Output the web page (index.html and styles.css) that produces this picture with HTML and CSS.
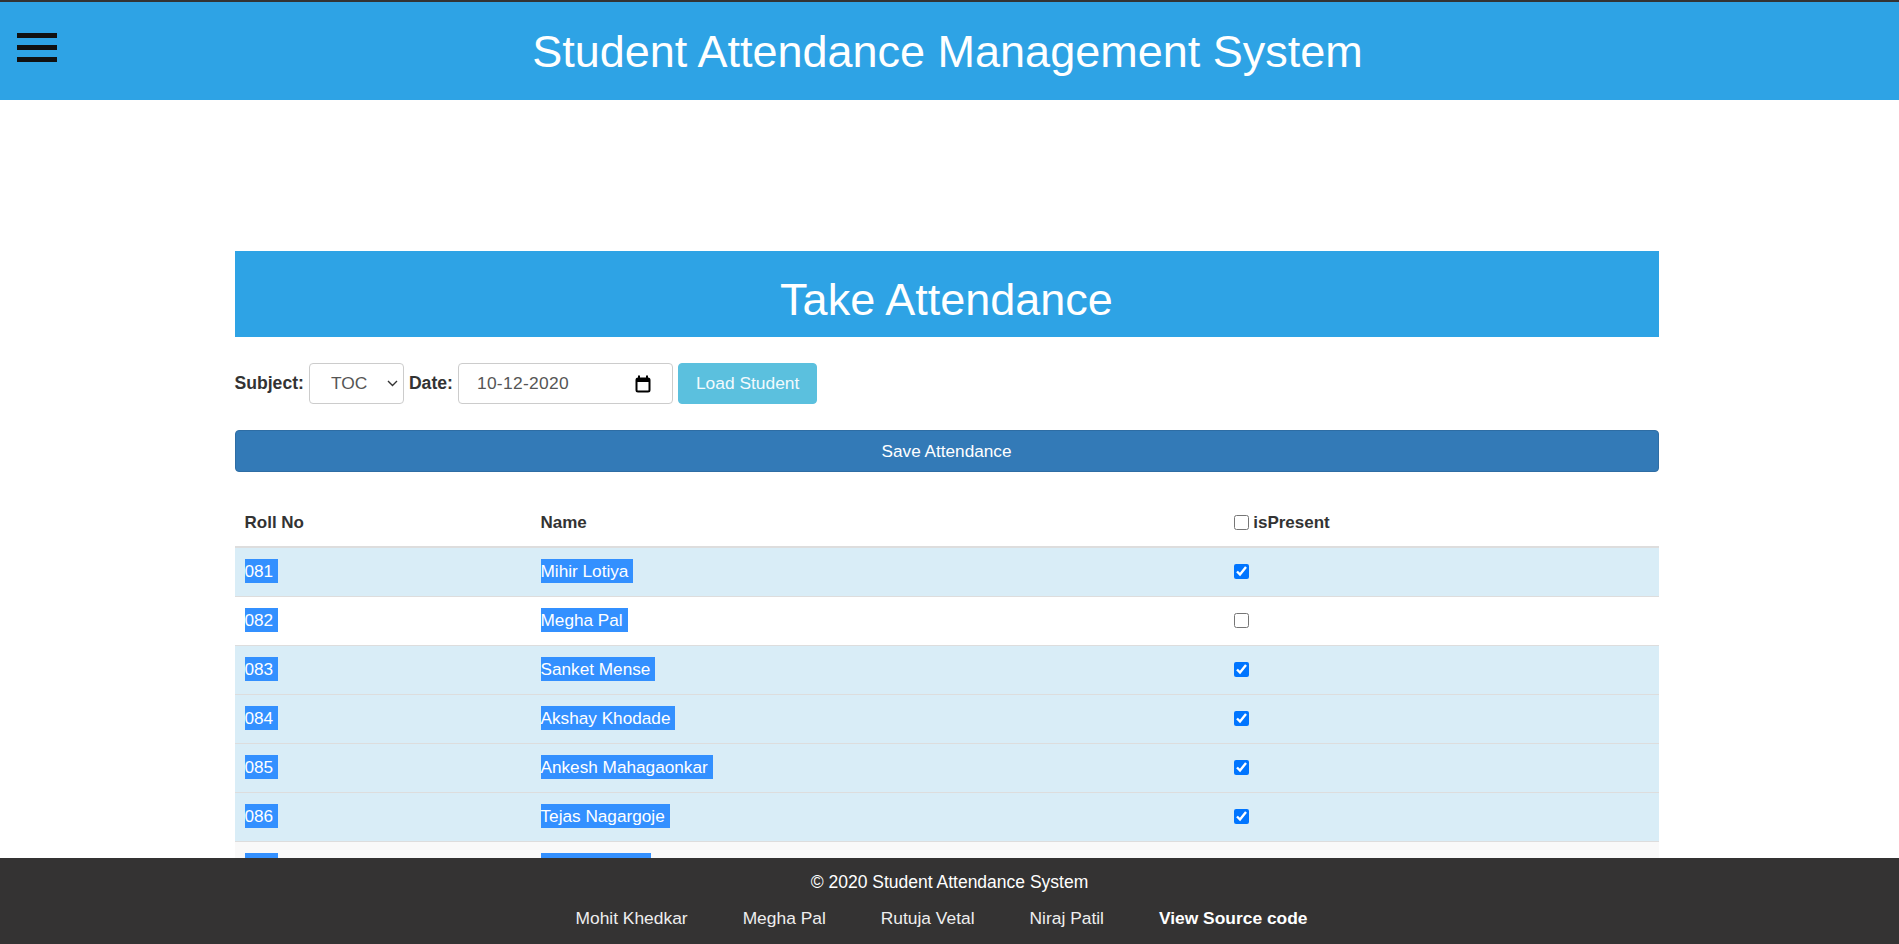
FILE: index.html
```html
<!DOCTYPE html>
<html lang="en">
<head>
<meta charset="utf-8">
<title>Student Attendance Management System</title>
<link rel="stylesheet" href="styles.css">
</head>
<body>
<header class="navbar">
  <button class="menu" aria-label="Menu"><span></span><span></span><span></span></button>
  <h1 class="site-title">Student Attendance Management System</h1>
  <div class="nav-spacer"></div>
</header>

<main class="container">
  <h2 class="band">Take Attendance</h2>

  <div class="form-row">
    <label class="lbl">Subject:</label>
    <div class="select">
      <span>TOC</span>
      <svg class="chev" width="11" height="7" viewBox="0 0 11 7"><path d="M1 1 L5.5 5.5 L10 1" fill="none" stroke="#333" stroke-width="1.4"/></svg>
    </div>
    <label class="lbl">Date:</label>
    <div class="date">
      <span>10-12-2020</span>
      <svg class="cal" width="16" height="18" viewBox="0 0 16 18"><rect x="1.5" y="3.5" width="13" height="13" rx="1.5" fill="none" stroke="#000" stroke-width="2"/><rect x="1.5" y="3.5" width="13" height="3.5" fill="#000"/><rect x="3" y="0.5" width="2" height="3.5" fill="#000"/><rect x="11" y="0.5" width="2" height="3.5" fill="#000"/></svg>
    </div>
    <button class="btn-load">Load Student</button>
  </div>

  <button class="btn-save">Save Attendance</button>

  <table class="att">
    <colgroup><col class="c1"><col class="c2"><col class="c3"></colgroup>
    <thead>
      <tr><th>Roll No</th><th>Name</th><th><input type="checkbox" class="cb"> isPresent</th></tr>
    </thead>
    <tbody>
      <tr class="info"><td><span class="sel">081</span></td><td><span class="sel">Mihir Lotiya</span></td><td><input type="checkbox" class="cb" checked></td></tr>
      <tr><td><span class="sel">082</span></td><td><span class="sel">Megha Pal</span></td><td><input type="checkbox" class="cb"></td></tr>
      <tr class="info"><td><span class="sel">083</span></td><td><span class="sel">Sanket Mense</span></td><td><input type="checkbox" class="cb" checked></td></tr>
      <tr class="info"><td><span class="sel">084</span></td><td><span class="sel">Akshay Khodade</span></td><td><input type="checkbox" class="cb" checked></td></tr>
      <tr class="info"><td><span class="sel">085</span></td><td><span class="sel">Ankesh Mahagaonkar</span></td><td><input type="checkbox" class="cb" checked></td></tr>
      <tr class="info"><td><span class="sel">086</span></td><td><span class="sel">Tejas Nagargoje</span></td><td><input type="checkbox" class="cb" checked></td></tr>
      <tr><td><span class="sel">087</span></td><td><span class="sel">Ashish Nayak</span></td><td><input type="checkbox" class="cb"></td></tr>
      <tr><td><span class="sel">088</span></td><td><span class="sel">Rutuja Vetal</span></td><td><input type="checkbox" class="cb"></td></tr>
      <tr><td><span class="sel">089</span></td><td><span class="sel">Niraj Patil</span></td><td><input type="checkbox" class="cb"></td></tr>
    </tbody>
  </table>
</main>

<footer class="footer">
  <div class="copy">© 2020 Student Attendance System</div>
  <nav class="links">
    <a href="#">Mohit Khedkar</a>
    <a href="#">Megha Pal</a>
    <a href="#">Rutuja Vetal</a>
    <a href="#">Niraj Patil</a>
    <a href="#" class="src">View Source code</a>
  </nav>
</footer>
</body>
</html>
```

FILE: styles.css
```css
* { box-sizing: border-box; }

html, body {
  margin: 0;
  padding: 0;
}

body {
  font-family: "Liberation Sans", Arial, Helvetica, sans-serif;
  font-size: 17px;
  color: #333;
  background: #fff;
  padding-bottom: 120px;
}

/* ---------- header ---------- */
.navbar {
  display: grid;
  grid-template-columns: 1fr auto 1fr;
  align-items: center;
  height: 100px;
  background: #2ea3e5;
  border-top: 2px solid #333;
}

.menu {
  align-self: start;
  justify-self: start;
  margin: 31px 0 0 17px;
  padding: 0;
  border: 0;
  background: transparent;
  display: flex;
  flex-direction: column;
  gap: 7px;
  width: 40px;
}

.menu span {
  display: block;
  width: 40px;
  height: 5px;
  background: #111;
}

.site-title {
  margin: 0;
  font-size: 45px;
  font-weight: normal;
  color: #fff;
  line-height: 1;
  transform: translateX(-2px);
}

/* ---------- main ---------- */
.container {
  width: 1424px;
  margin: 0 0 0 calc(50% - 715px);
}

.band {
  margin: 151px 0 0;
  height: 86px;
  padding-top: 12px;
  background: #2ea3e5;
  color: #fff;
  font-size: 45px;
  font-weight: normal;
  display: flex;
  align-items: center;
  justify-content: center;
}

.form-row {
  margin-top: 26px;
  display: flex;
  align-items: center;
  gap: 5px;
  height: 41px;
}

.lbl {
  font-weight: bold;
  font-size: 17.6px;
  color: #333;
}

.select, .date {
  height: 41px;
  border: 1px solid #ccc;
  border-radius: 4px;
  display: flex;
  align-items: center;
  color: #555;
  font-size: 17.4px;
  background: #fff;
}

.select {
  width: 95px;
  padding: 0 5px 0 21px;
  justify-content: space-between;
}

.date {
  width: 215px;
  padding: 0 21px 0 18px;
  justify-content: space-between;
  letter-spacing: 0.3px;
}

.btn-load {
  height: 41px;
  padding: 0 17px;
  border: 1px solid #5bc0de;
  border-radius: 4px;
  background: #5bc0de;
  color: #f2fafd;
  font-family: inherit;
  font-size: 17.4px;
}

.btn-save {
  display: block;
  width: 100%;
  margin-top: 26px;
  height: 42px;
  background: #337ab7;
  border: 1px solid #2e6da4;
  border-radius: 4px;
  color: #fff;
  font-family: inherit;
  font-size: 17.2px;
}

/* ---------- table ---------- */
.att {
  width: 100%;
  margin-top: 25px;
  border-collapse: collapse;
  table-layout: fixed;
}

.c1 { width: 296px; }
.c2 { width: 693px; }

.att th {
  text-align: left;
  font-weight: bold;
  padding: 14px 10px 11px;
  line-height: 24px;
  border-bottom: 2px solid #ddd;
  color: #333;
}

.att td {
  padding: 11px 10px 13px;
  line-height: 24px;
  border-top: 1px solid #ddd;
  height: 49px;
  font-size: 17.2px;
}

.att tbody tr:nth-child(odd) { background: #f9f9f9; }
.att tbody tr.info { background: #d9edf7; }
.att tbody tr:nth-child(2) { background: #fff; }

.sel {
  display: inline-block;
  line-height: 24px;
  background: #3390ff;
  color: #fff;
  padding-right: 5px;
}

.cb {
  width: 15px;
  height: 15px;
  margin: 0;
  vertical-align: -2px;
  accent-color: #0075ff;
}

/* ---------- footer ---------- */
.footer {
  position: fixed;
  left: 0;
  right: 0;
  bottom: 0;
  height: 86px;
  background: #343333;
  color: #fff;
  text-align: center;
  padding-top: 12px;
}

.copy {
  line-height: 24px;
  font-size: 17.5px;
}

.links {
  margin-top: 12px;
  display: flex;
  justify-content: center;
  gap: 55px;
  padding-right: 16px;
  line-height: 24px;
}

.links a {
  color: #eee;
  text-decoration: none;
  font-size: 17.4px;
}

.links a.src {
  color: #fff;
  font-weight: bold;
}
```
